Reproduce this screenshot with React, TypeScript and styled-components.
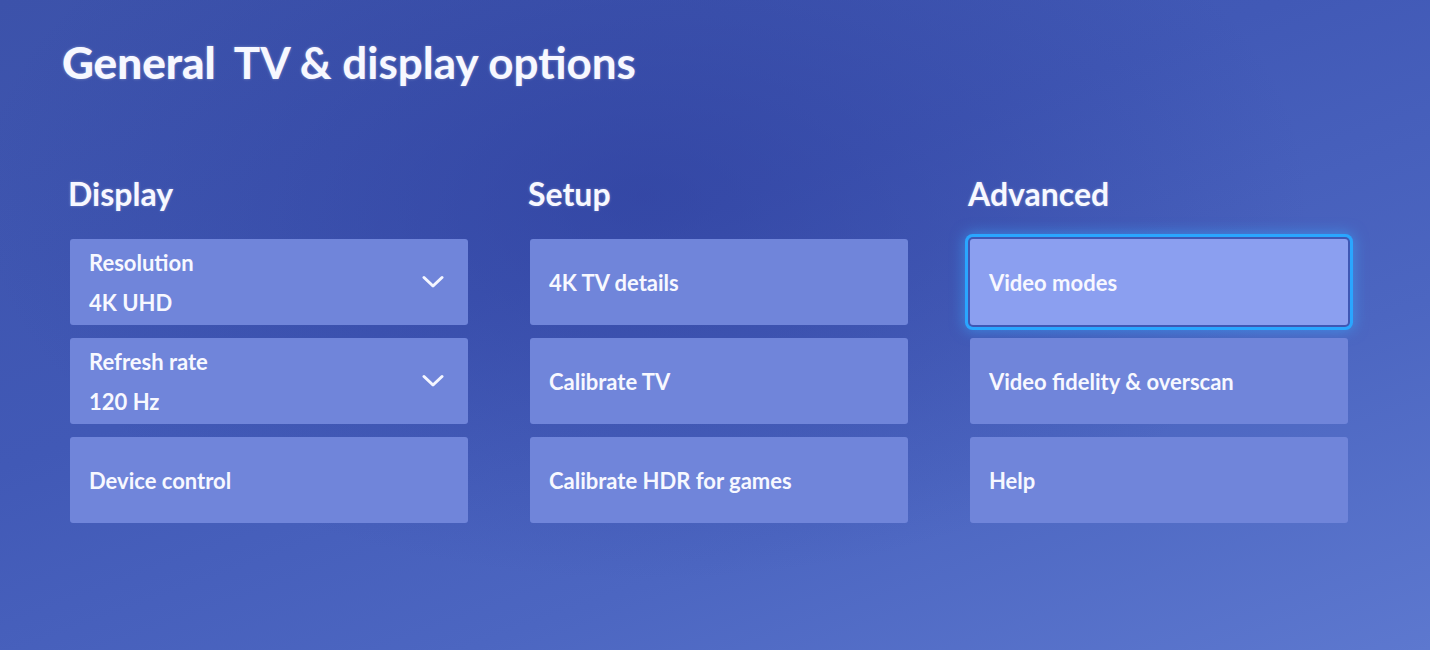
import React from 'react'
import styled, { createGlobalStyle } from 'styled-components'

type Item = { label: string; value?: string; dropdown?: boolean; focused?: boolean }

const columns: { title: string; items: Item[] }[] = [
  {
    title: 'Display',
    items: [
      { label: 'Resolution', value: '4K UHD', dropdown: true },
      { label: 'Refresh rate', value: '120 Hz', dropdown: true },
      { label: 'Device control' }
    ]
  },
  {
    title: 'Setup',
    items: [{ label: '4K TV details' }, { label: 'Calibrate TV' }, { label: 'Calibrate HDR for games' }]
  },
  {
    title: 'Advanced',
    items: [
      { label: 'Video modes', focused: true },
      { label: 'Video fidelity & overscan' },
      { label: 'Help' }
    ]
  }
]

const Chevron = () => (
  <svg width="22" height="14" viewBox="0 0 22 14" fill="none">
    <path d="M2 2.5 L11 11 L20 2.5" stroke="#f4f6ff" strokeWidth="3" strokeLinecap="round" strokeLinejoin="round" />
  </svg>
)

const App = () => {
  return (
    <>
      <GlobalStyle />
      <Screen>
        <Header>
          <Crumb>General</Crumb>
          <Title>TV &amp; display options</Title>
        </Header>
        <Columns>
          {columns.map((col) => (
            <Column key={col.title}>
              <ColumnTitle>{col.title}</ColumnTitle>
              {col.items.map((item) => (
                <Tile key={item.label} $focused={item.focused}>
                  <TileText>
                    <TileLabel>{item.label}</TileLabel>
                    {item.value && <TileLabel>{item.value}</TileLabel>}
                  </TileText>
                  {item.dropdown && <Chevron />}
                </Tile>
              ))}
            </Column>
          ))}
        </Columns>
      </Screen>
    </>
  )
}

const GlobalStyle = createGlobalStyle`
  body {
    margin: 0;
    background: #4259b6;
    font-family: Lato, "Open Sans", sans-serif;
    -webkit-font-smoothing: antialiased;
  }
`

const Screen = styled.main`
  width: 100%;
  height: 650px;
  box-sizing: border-box;
  padding: 38px 0 0 62px;
  overflow: hidden;
  color: #f7f8ff;
  background:
    radial-gradient(ellipse at 45% 30%, rgba(40, 55, 150, 0.5) 0%, rgba(40, 55, 150, 0) 60%),
    linear-gradient(160deg, #3c52aa 0%, #4159b6 40%, #4c66c1 70%, #5d78cf 100%);
`

const Header = styled.h1`
  display: flex;
  align-items: baseline;
  gap: 18px;
  margin: 0;
  font-size: 44px;
  line-height: 1.1;
  text-shadow: 0 0 3px rgba(255, 255, 255, 0.35);
`

const Crumb = styled.span`
  font-weight: 900;
`

const Title = styled.span`
  font-weight: 700;
`

const Columns = styled.div`
  display: grid;
  grid-template-columns: 398px 378px 378px;
  column-gap: 62px;
  margin: 92px 0 0 8px;
`

const Column = styled.section`
  display: flex;
  flex-direction: column;
  gap: 13px;
`

const ColumnTitle = styled.h2`
  margin: 0 0 16px -2px;
  font-size: 32px;
  font-weight: 700;
  line-height: 1;
  text-shadow: 0 0 3px rgba(255, 255, 255, 0.3);
`

const Tile = styled.div<{ $focused?: boolean }>`
  display: flex;
  align-items: center;
  justify-content: space-between;
  height: 86px;
  box-sizing: border-box;
  padding: 0 24px 0 19px;
  border-radius: 3px;
  background: ${(p) => (p.$focused ? '#8b9ff0' : '#7085da')};
  box-shadow: ${(p) =>
    p.$focused
      ? '0 0 0 2px #3f57b4, 0 0 0 5px #2aa6ff, 0 0 14px 6px rgba(60, 170, 255, 0.55)'
      : 'none'};
`

const TileText = styled.div`
  display: flex;
  flex-direction: column;
  gap: 18px;
  padding-top: 2px;
`

const TileLabel = styled.span`
  font-size: 22px;
  font-weight: 700;
  line-height: 1;
`

export default App
